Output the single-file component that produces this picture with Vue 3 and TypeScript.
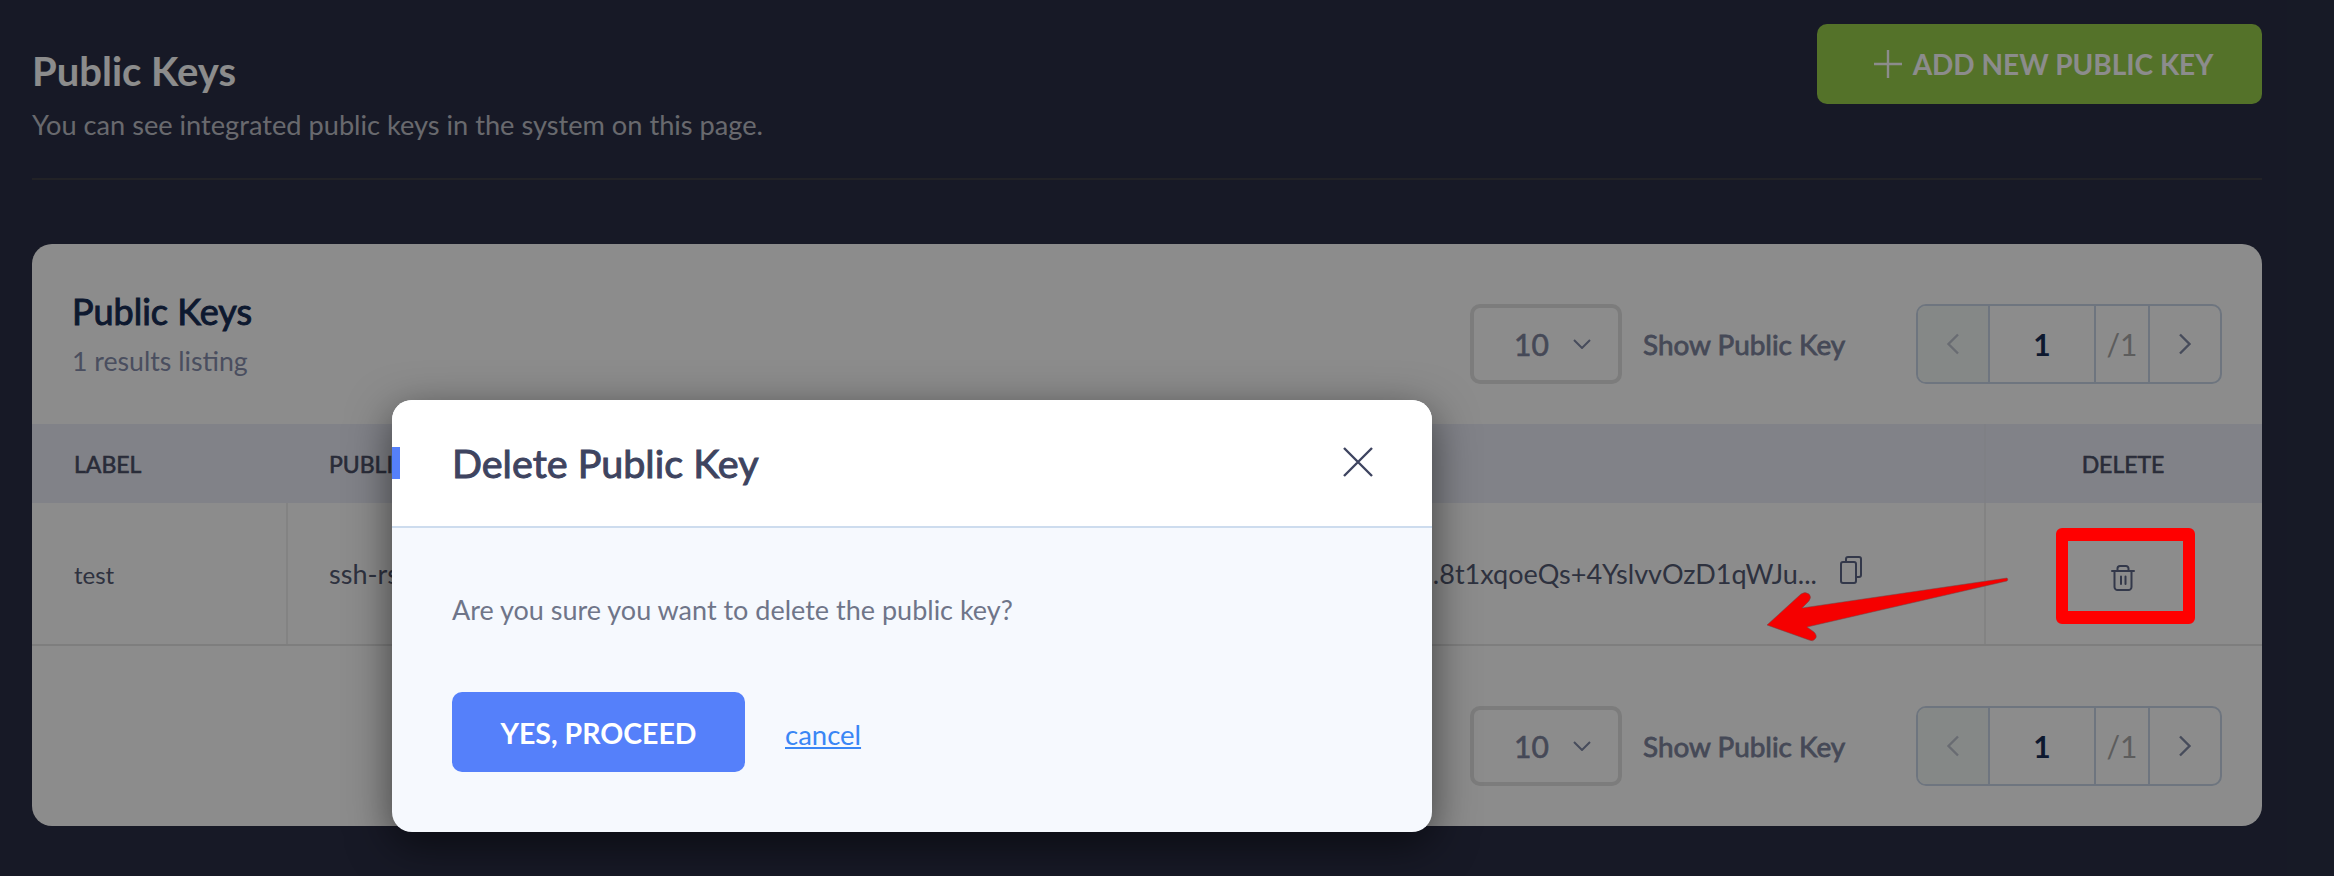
<script setup lang="ts">
const footerPager = { size: 10, label: 'Show Public Key', page: 1, total: 1 }
</script>

<template>
  <div class="page">
    <header class="top">
      <div>
        <h1>Public Keys</h1>
        <p>You can see integrated public keys in the system on this page.</p>
      </div>
      <button class="add">
        <svg width="28" height="28" viewBox="0 0 28 28"><path d="M14 0v28M0 14h28" stroke="#fff" stroke-width="2.4" fill="none" /></svg>
        ADD NEW PUBLIC KEY
      </button>
    </header>

    <section class="card">
      <div class="card-head">
        <div class="heading">
          <h2>Public Keys</h2>
          <span>1 results listing</span>
        </div>
        <div class="controls">
          <div class="select">
            <span>{{ footerPager.size }}</span>
            <svg width="18" height="10" viewBox="0 0 18 10"><path d="M1 1l8 8 8-8" stroke="#818aa7" stroke-width="2" fill="none" /></svg>
          </div>
          <span class="show">{{ footerPager.label }}</span>
          <div class="pager">
            <div class="cell prev"><svg width="14" height="22" viewBox="0 0 14 22"><path d="M12 1.500L2.500 11l9.500 9.500" stroke="#c0c5d0" stroke-width="2.400" fill="none" /></svg></div>
            <div class="cell cur">{{ footerPager.page }}</div>
            <div class="cell tot">/{{ footerPager.total }}</div>
            <div class="cell nxt"><svg width="14" height="22" viewBox="0 0 14 22"><path d="M2 1.500L11.500 11 2 20.500" stroke="#818aa7" stroke-width="2.400" fill="none" /></svg></div>
          </div>
        </div>
      </div>

      <div class="row thead">
        <div class="c1">LABEL</div>
        <div class="c2">PUBLIC KEY</div>
        <div class="c3">DELETE</div>
      </div>
      <div class="row tbody">
        <div class="c1">test</div>
        <div class="c2">
          <span class="key-left">ssh-rsa AAAAB3NzaC1yc2EAAAADAQABAAABgQC7</span>
          <span class="key-right">
            <span class="key-end">.8t1xqoeQs+4YslvvOzD1qWJu...</span>
            <svg class="copy" width="22" height="28" viewBox="0 0 22 28" fill="none" stroke="#5d6787" stroke-width="2"><rect x="1" y="6" width="15" height="21" rx="2" /><path d="M6 6V3a2 2 0 0 1 2-2h11a2 2 0 0 1 2 2v16a2 2 0 0 1-2 2h-3" /></svg>
          </span>
        </div>
        <div class="c3">
          <svg width="24" height="26" viewBox="0 0 24 26" fill="none" stroke="#5d6787" stroke-width="2" stroke-linecap="round"><path d="M1 6h22M6.500 6V3.500A2.500 2.500 0 0 1 9 1h6a2.500 2.500 0 0 1 2.500 2.500V6M3.500 6v16a3 3 0 0 0 3 3h11a3 3 0 0 0 3-3V6M10 11.500v7.500M14.500 11.500v7.500" /></svg>
        </div>
      </div>

      <div class="card-foot">
        <div class="controls">
          <div class="select">
            <span>{{ footerPager.size }}</span>
            <svg width="18" height="10" viewBox="0 0 18 10"><path d="M1 1l8 8 8-8" stroke="#818aa7" stroke-width="2" fill="none" /></svg>
          </div>
          <span class="show">{{ footerPager.label }}</span>
          <div class="pager">
            <div class="cell prev"><svg width="14" height="22" viewBox="0 0 14 22"><path d="M12 1.500L2.500 11l9.500 9.500" stroke="#c0c5d0" stroke-width="2.400" fill="none" /></svg></div>
            <div class="cell cur">{{ footerPager.page }}</div>
            <div class="cell tot">/{{ footerPager.total }}</div>
            <div class="cell nxt"><svg width="14" height="22" viewBox="0 0 14 22"><path d="M2 1.500L11.500 11 2 20.500" stroke="#818aa7" stroke-width="2.400" fill="none" /></svg></div>
          </div>
        </div>
      </div>
    </section>

    <div class="overlay">
      <div class="modal">
        <div class="modal-head">
          <i class="mark"></i>
          <h3>Delete Public Key</h3>
          <svg class="close" width="30" height="30" viewBox="0 0 30 30"><path d="M1 1l28 28M29 1L1 29" stroke="#3e4460" stroke-width="2.400" fill="none" /></svg>
        </div>
        <div class="modal-body">
          <p>Are you sure you want to delete the public key?</p>
          <div class="actions">
            <button class="yes">YES, PROCEED</button>
            <a class="cancel">cancel</a>
          </div>
        </div>
      </div>
    </div>

    <div class="red-box"></div>
    <svg class="arrow" width="260" height="80" viewBox="1760 570 260 80">
      <path d="M2007 578 Q2008.500 579.500 2007 581 L1807 627 L1814 632 Q1818 636 1815 639 Q1813 642 1809 640 L1767 625 L1801 594 Q1805 591 1809 594 Q1812 597 1809 601 L1802 608 Z" fill="#f50000" stroke="#6a4a4a" stroke-width="0.5" />
    </svg>
  </div>
</template>

<style>
html, body { margin: 0; background: #2a2f45; }
</style>

<style scoped>
.page {
  position: relative;
  width: 2334px;
  height: 876px;
  overflow: hidden;
  box-sizing: border-box;
  padding: 24px 72px 0 32px;
  background: #2a2f45;
  font-family: Lato, "Open Sans", sans-serif;
  color: #555b74;
}
.top {
  display: flex;
  justify-content: space-between;
  align-items: flex-start;
  height: 154px;
  border-bottom: 2px solid #3e3f46;
}
.top h1 { margin: 23px 0 0; font-size: 40px; line-height: 48px; font-weight: 700; color: #fff; }
.top p { margin: 12px 0 0; font-size: 27.200px; line-height: 36px; color: #bfc0c8; }
.add {
  display: flex;
  align-items: center;
  justify-content: center;
  gap: 11px;
  width: 445px;
  height: 80px;
  padding-left: 14px;
  border: 0;
  border-radius: 10px;
  background: #99cf4c;
  color: #fff;
  font: 700 28px Lato, sans-serif;
}
.card {
  margin-top: 64px;
  height: 582px;
  background: #fff;
  border-radius: 20px;
  display: flex;
  flex-direction: column;
}
.card-head {
  height: 180px;
  box-sizing: border-box;
  padding: 47px 40px 0 40px;
  display: flex;
  justify-content: space-between;
  align-items: flex-start;
}
.heading h2 { margin: 0; font-size: 36px; line-height: 40px; font-weight: 400; -webkit-text-stroke: 1px #192f57; color: #192f57; }
.heading span { display: block; margin-top: 14px; font-size: 26.700px; line-height: 32px; color: #878fae; }
.controls { display: flex; align-items: stretch; height: 80px; margin-top: 13px; }
.card-foot .controls { margin-top: 0; }
.select {
  box-sizing: border-box;
  width: 152px;
  border: 4px solid #e2e2e2;
  border-radius: 10px;
  display: flex;
  align-items: center;
  gap: 24px;
  padding-left: 40px;
  font-size: 30px;
  -webkit-text-stroke: .6px #7f869e;
  color: #7f869e;
}
.show { align-self: center; margin-left: 21px; width: 273px; font-size: 27.900px; -webkit-text-stroke: .8px #7f869e; color: #7f869e; }
.pager {
  box-sizing: border-box;
  width: 306px;
  border: 2px solid #c8d6e8;
  border-radius: 10px;
  display: flex;
  overflow: hidden;
}
.cell { display: flex; align-items: center; justify-content: center; border-right: 2px solid #c8d6e8; box-sizing: border-box; }
.prev { width: 72px; background: #f2f7f6; }
.cur { width: 106px; font-size: 30px; font-weight: 700; color: #192f57; }
.tot { width: 54px; font-size: 30px; color: #aaaaaa; }
.nxt { flex: 1; border-right: 0; }
.row { display: flex; }
.c1 { width: 256px; box-sizing: border-box; padding-left: 42px; }
.c2 { flex: 1; box-sizing: border-box; padding: 0 122px 0 41px; }
.c3 { width: 278px; box-sizing: border-box; padding-right: 2px; display: flex; justify-content: center; align-items: center; }
.thead {
  height: 79px;
  align-items: center;
  background: #ebedf7;
  font-size: 23px;
  -webkit-text-stroke: .6px #4b5068;
  color: #4b5068;
}
.thead .c1, .thead .c2, .thead .c3 { height: 100%; display: flex; align-items: center; }
.thead .c3 { border-left: 2px solid #e8eaf3; }
.tbody {
  height: 143px;
  box-sizing: border-box;
  border-bottom: 2px solid #e6e6e6;
  font-size: 27px;
}
.tbody .c1, .tbody .c2 { display: flex; align-items: center; }
.tbody .c1 { border-right: 2px solid #eee; font-size: 24px; padding-top: 2px; }
.tbody .c2 { justify-content: space-between; white-space: nowrap; }
.tbody .c3 { border-left: 2px solid #eee; padding-top: 9px; }
.key-right { display: flex; align-items: center; gap: 23px; }
.copy { margin-bottom: 8px; }
.card-foot { display: flex; justify-content: flex-end; padding: 60px 40px 0 0; }
.overlay {
  position: absolute;
  inset: 0;
  background: rgba(0, 0, 0, .45);
  padding: 400px 0 0 392px;
}
.modal {
  width: 1040px;
  height: 432px;
  border-radius: 20px;
  overflow: hidden;
  background: #f6f9fe;
  box-shadow: 0 12px 44px rgba(0, 0, 0, .55);
  display: flex;
  flex-direction: column;
}
.modal-head {
  position: relative;
  height: 128px;
  box-sizing: border-box;
  background: #fff;
  border-bottom: 2px solid #cddcee;
  padding: 0 59px 2px 60px;
  display: flex;
  align-items: center;
  justify-content: space-between;
}
.mark { position: absolute; left: 0; top: 47px; width: 8px; height: 32px; background: #5580fa; }
.modal-head h3 { margin: 0; font-size: 39.500px; font-weight: 400; -webkit-text-stroke: 1px #3e4460; color: #3e4460; }
.modal-body { padding: 64px 60px 0; }
.modal-body p { margin: 0; font-size: 27px; line-height: 36px; color: #6f7589; }
.actions { display: flex; align-items: center; gap: 40px; margin-top: 64px; }
.yes {
  width: 293px;
  height: 80px;
  border: 0;
  padding: 2px 0 0;
  border-radius: 10px;
  background: #5580fa;
  color: #fff;
  font: 700 28.500px Lato, sans-serif;
}
.cancel { font-size: 27.500px; color: #3a86f5; text-decoration: underline; padding-top: 4px; }
.red-box {
  position: absolute;
  left: 2056px;
  top: 528px;
  width: 139px;
  height: 96px;
  box-sizing: border-box;
  border: solid #f00;
  border-width: 13px 12px;
  border-radius: 6px;
}
.arrow { position: absolute; left: 1760px; top: 570px; }
</style>
